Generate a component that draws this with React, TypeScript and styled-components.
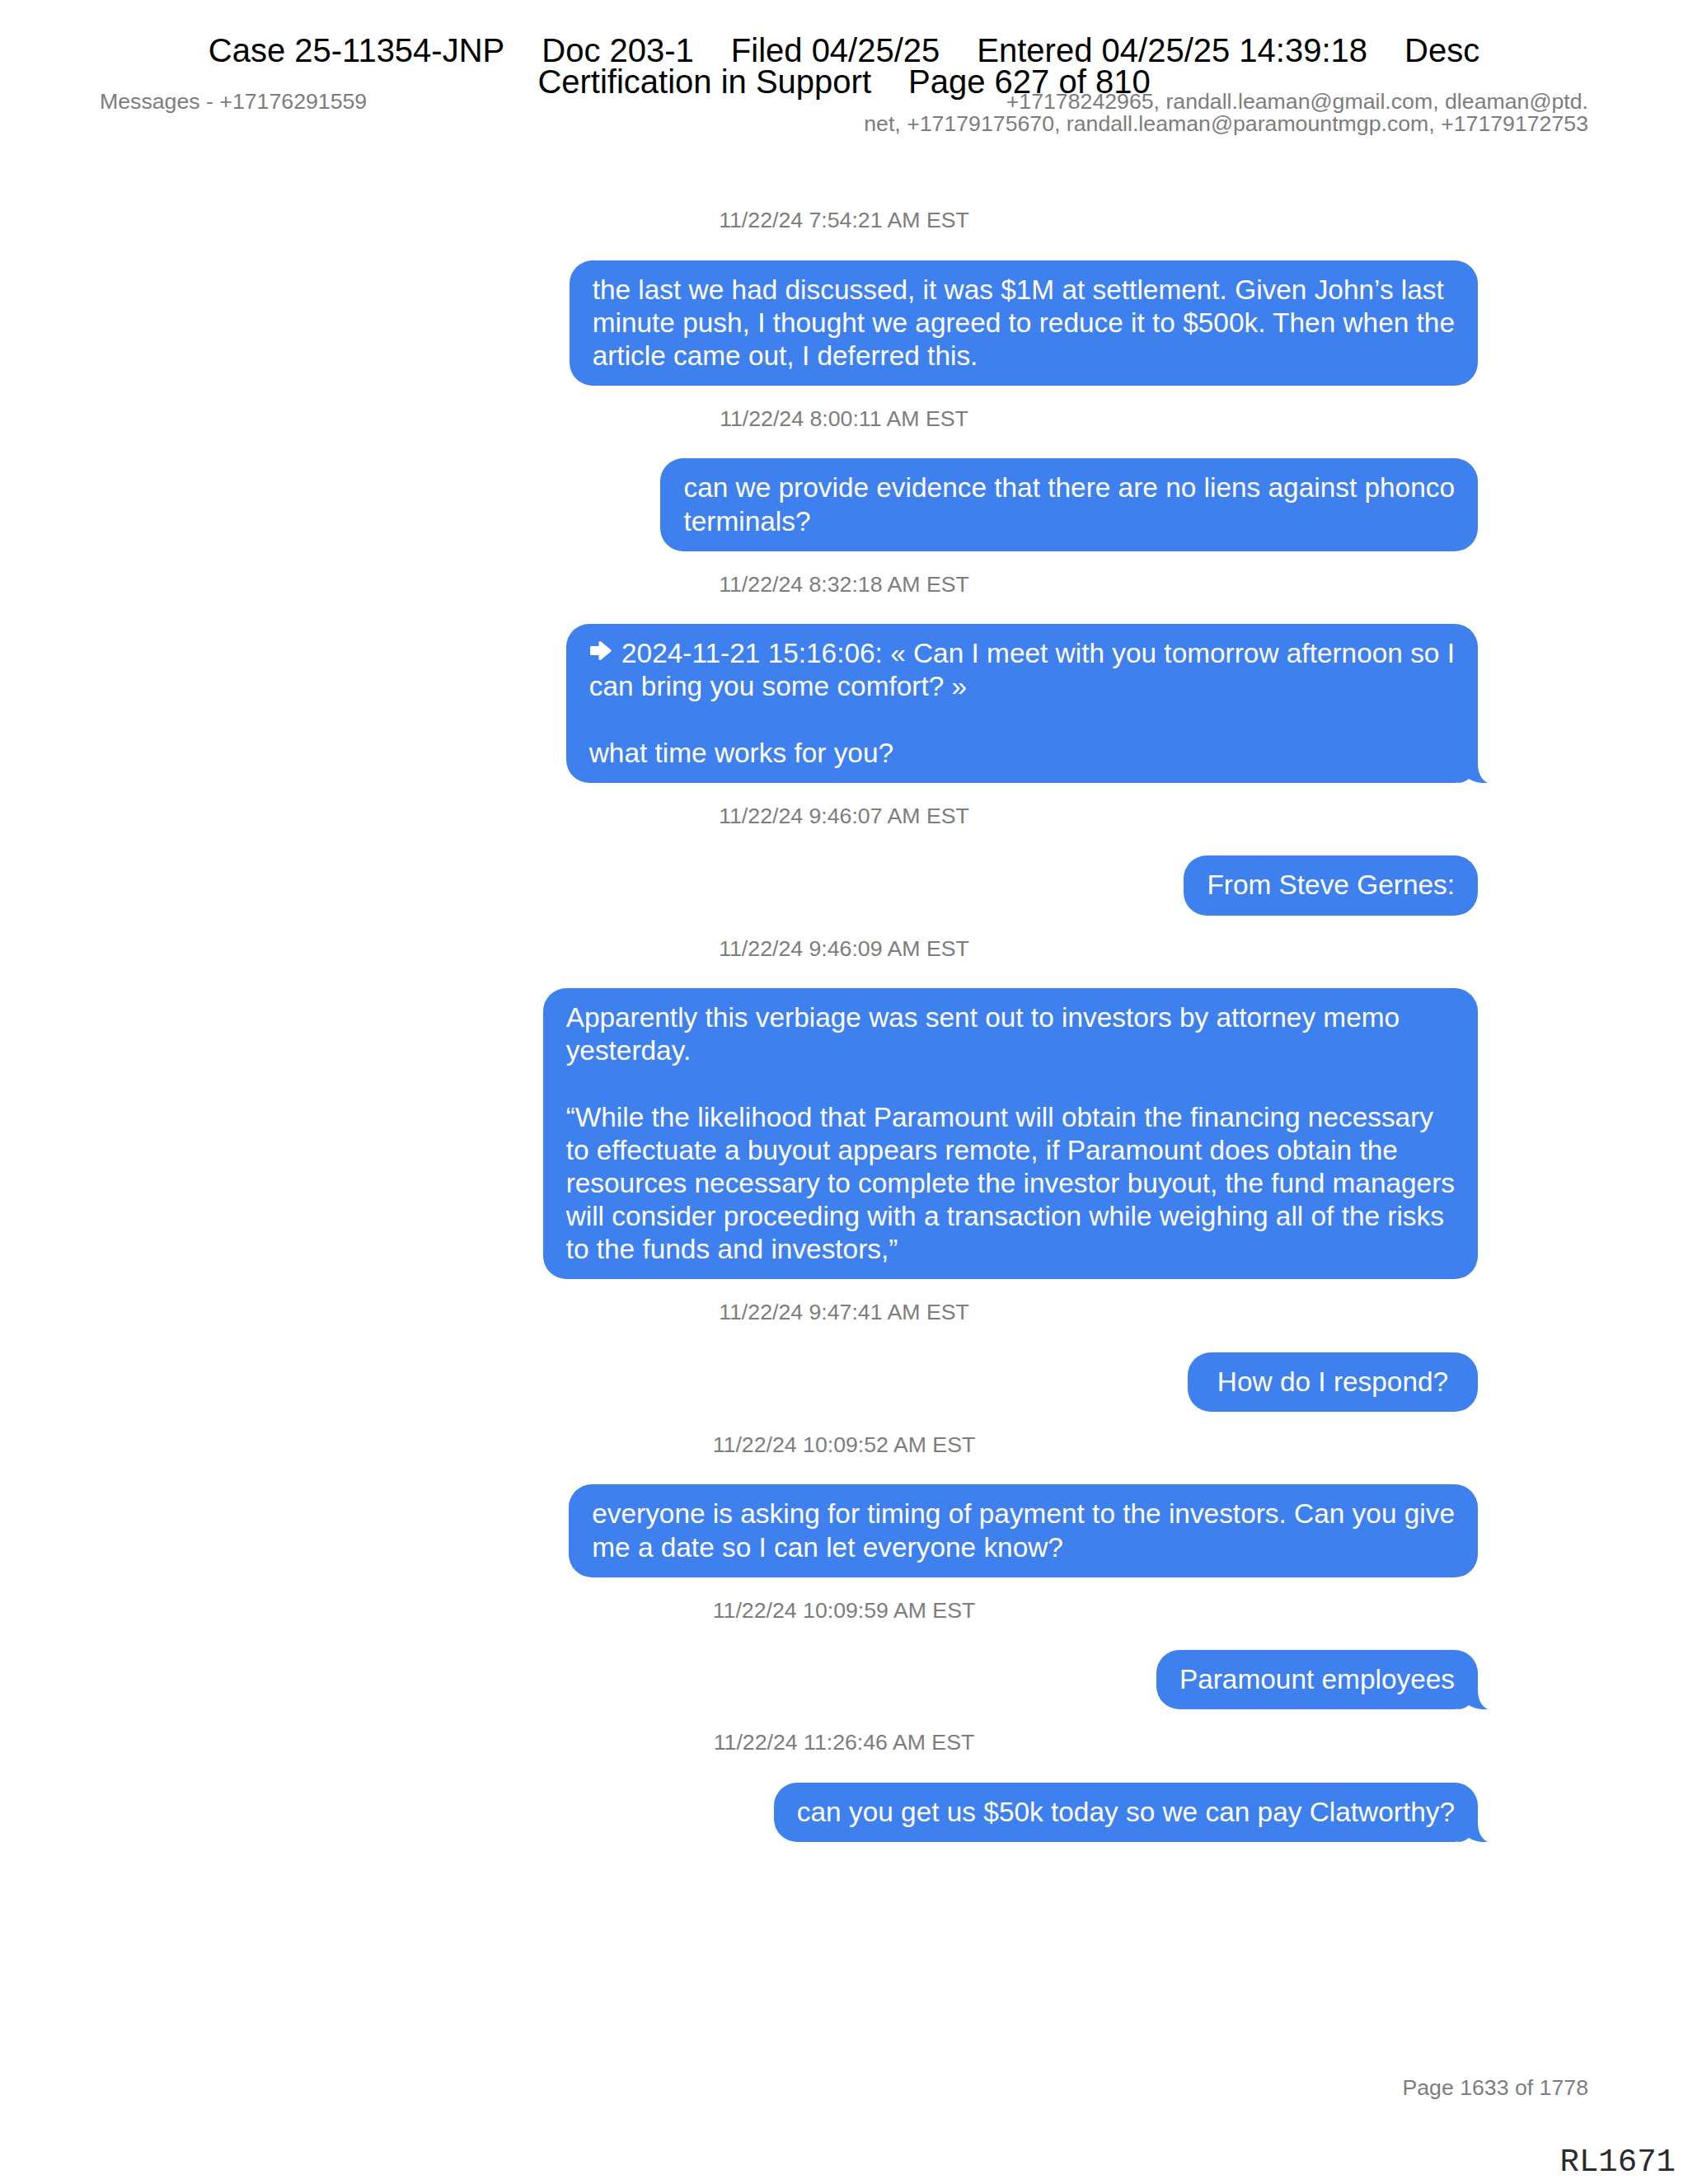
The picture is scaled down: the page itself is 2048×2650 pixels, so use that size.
import React from "react";
import styled, { createGlobalStyle } from "styled-components";

const BLUE = "#3e80ee";
const GRAY = "#7d7d7d";

const GlobalStyle = createGlobalStyle`
  html, body {
    margin: 0;
    padding: 0;
    background: #ffffff;
  }
  body {
    font-family: "Liberation Sans", Arial, sans-serif;
  }
`;

const Page = styled.div`
  position: relative;
  width: 2048px;
  height: 2650px;
  box-sizing: border-box;
  padding: 110px 121px 4px;
  display: flex;
  flex-direction: column;
  font-family: "Liberation Sans", Arial, sans-serif;
  background: #ffffff;
  overflow: hidden;
`;

const Stamp = styled.div`
  position: absolute;
  top: 42px;
  left: 0;
  right: 0;
  display: flex;
  flex-direction: column;
  align-items: center;
  font-size: 40px;
  line-height: 38px;
  color: #000000;
  pointer-events: none;
`;

const StampLine = styled.div`
  display: flex;
  column-gap: 45px;
  white-space: nowrap;
`;

const TopRow = styled.div`
  display: flex;
  justify-content: space-between;
  align-items: flex-start;
`;

const MetaText = styled.div<{ $align?: "left" | "right" }>`
  font-size: 26.7px;
  line-height: 27px;
  color: ${GRAY};
  text-align: ${(p) => p.$align ?? "left"};
  white-space: nowrap;
`;

const Thread = styled.div`
  display: flex;
  flex-direction: column;
  margin-top: 89px;
`;

const Timestamp = styled.div`
  text-align: center;
  font-size: 26.7px;
  line-height: 28px;
  color: ${GRAY};
  margin-bottom: 34.5px;
`;

const BubbleRow = styled.div`
  display: flex;
  justify-content: flex-end;
  padding-right: 134px;
  margin-bottom: 26px;
`;

const Bubble = styled.div`
  position: relative;
  box-sizing: border-box;
  min-width: 352px;
  display: flex;
  justify-content: center;
  padding: 16px 28px;
  background: ${BLUE};
  color: #ffffff;
  border-radius: 28px;
  font-size: 33.4px;
  line-height: 40.15px;
`;

const BubbleText = styled.div`
  display: flex;
  flex-direction: column;
`;

const Line = styled.div`
  white-space: pre;
  min-height: 40.15px;
`;

const Tail = styled.svg`
  position: absolute;
  right: -12px;
  bottom: 0;
  width: 36px;
  height: 30px;
  display: block;
`;

const Arrow = styled.svg`
  width: 27px;
  height: 25px;
  vertical-align: 2px;
  margin-right: 3px;
`;

const Footer = styled.div`
  margin-top: auto;
  display: flex;
  flex-direction: column;
  align-items: flex-end;
`;

const PageNum = styled.div`
  font-size: 26.7px;
  line-height: 27px;
  color: ${GRAY};
`;

const Bates = styled.div`
  font-family: "Liberation Mono", "Courier New", monospace;
  font-size: 39px;
  line-height: 44px;
  color: #2a2a2a;
  margin-top: 55px;
  margin-right: -106px;
`;

type Msg = {
  time: string;
  lines: string[];
  tail?: boolean;
  arrow?: boolean;
};

const messages: Msg[] = [
  {
    time: "11/22/24 7:54:21 AM EST",
    lines: [
      "the last we had discussed, it was $1M at settlement. Given John\u2019s last",
      "minute push, I thought we agreed to reduce it to $500k. Then when the",
      "article came out, I deferred this.",
    ],
  },
  {
    time: "11/22/24 8:00:11 AM EST",
    lines: [
      "can we provide evidence that there are no liens against phonco",
      "terminals?",
    ],
  },
  {
    time: "11/22/24 8:32:18 AM EST",
    arrow: true,
    tail: true,
    lines: [
      " 2024-11-21 15:16:06: \u00ab Can I meet with you tomorrow afternoon so I",
      "can bring you some comfort? \u00bb",
      "",
      "what time works for you?",
    ],
  },
  {
    time: "11/22/24 9:46:07 AM EST",
    lines: ["From Steve Gernes:"],
  },
  {
    time: "11/22/24 9:46:09 AM EST",
    lines: [
      "Apparently this verbiage was sent out to investors by attorney memo",
      "yesterday.",
      "",
      "\u201cWhile the likelihood that Paramount will obtain the financing necessary",
      "to effectuate a buyout appears remote, if Paramount does obtain the",
      "resources necessary to complete the investor buyout, the fund managers",
      "will consider proceeding with a transaction while weighing all of the risks",
      "to the funds and investors,\u201d",
    ],
  },
  {
    time: "11/22/24 9:47:41 AM EST",
    lines: ["How do I respond?"],
  },
  {
    time: "11/22/24 10:09:52 AM EST",
    lines: [
      "everyone is asking for timing of payment to the investors. Can you give",
      "me a date so I can let everyone know?",
    ],
  },
  {
    time: "11/22/24 10:09:59 AM EST",
    tail: true,
    lines: ["Paramount employees"],
  },
  {
    time: "11/22/24 11:26:46 AM EST",
    tail: true,
    lines: ["can you get us $50k today so we can pay Clatworthy?"],
  },
];

function ForwardArrow() {
  return (
    <Arrow viewBox="0 0 27 25" aria-hidden="true">
      <polygon
        points="2.5,8.5 13,8.5 13,2.5 25,12.5 13,22.5 13,16.5 2.5,16.5"
        fill="#ffffff"
        stroke="#ffffff"
        strokeWidth="3"
        strokeLinejoin="round"
      />
    </Arrow>
  );
}

function BubbleTail() {
  return (
    <Tail viewBox="0 0 36 30" aria-hidden="true">
      <path
        d="M0 0 H24 V6 C24 18 28 26 36 30 C30 30.6 20 29.5 13 25 C9 28 5 30 0 30 Z"
        fill={BLUE}
      />
    </Tail>
  );
}

function Message({ msg }: { msg: Msg }) {
  return (
    <>
      <Timestamp>{msg.time}</Timestamp>
      <BubbleRow>
        <Bubble>
          <BubbleText>
            {msg.lines.map((line, i) => (
              <Line key={i}>
                {msg.arrow && i === 0 ? <ForwardArrow /> : null}
                {line}
              </Line>
            ))}
          </BubbleText>
          {msg.tail ? <BubbleTail /> : null}
        </Bubble>
      </BubbleRow>
    </>
  );
}

export default function App() {
  return (
    <>
      <GlobalStyle />
      <Page>
        <TopRow>
          <MetaText>Messages - +17176291559</MetaText>
          <MetaText $align="right">
            +17178242965, randall.leaman@gmail.com, dleaman@ptd.
            <br />
            net, +17179175670, randall.leaman@paramountmgp.com, +17179172753
          </MetaText>
        </TopRow>
        <Thread>
          {messages.map((m, i) => (
            <Message key={i} msg={m} />
          ))}
        </Thread>
        <Footer>
          <PageNum>Page 1633 of 1778</PageNum>
          <Bates>RL1671</Bates>
        </Footer>
        <Stamp>
          <StampLine>
            <span>Case 25-11354-JNP</span>
            <span>Doc 203-1</span>
            <span>Filed 04/25/25</span>
            <span>Entered 04/25/25 14:39:18</span>
            <span>Desc</span>
          </StampLine>
          <StampLine>
            <span>Certification in Support</span>
            <span>Page 627 of 810</span>
          </StampLine>
        </Stamp>
      </Page>
    </>
  );
}
